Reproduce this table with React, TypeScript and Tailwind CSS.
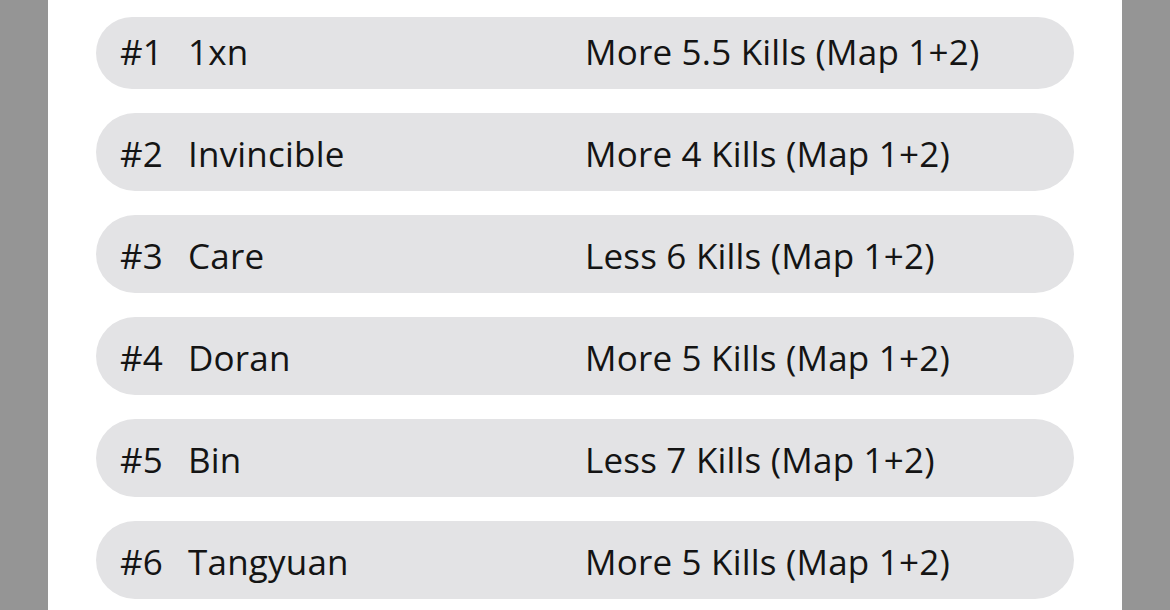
import React from "react";

// 選手ごとのピック
interface Pick {
  rank: number;
  player: string;
  line: string;
}

const picks: Pick[] = [
  { rank: 1, player: "1xn", line: "More 5.5 Kills (Map 1+2)" },
  { rank: 2, player: "Invincible", line: "More 4 Kills (Map 1+2)" },
  { rank: 3, player: "Care", line: "Less 6 Kills (Map 1+2)" },
  { rank: 4, player: "Doran", line: "More 5 Kills (Map 1+2)" },
  { rank: 5, player: "Bin", line: "Less 7 Kills (Map 1+2)" },
  { rank: 6, player: "Tangyuan", line: "More 5 Kills (Map 1+2)" },
];

const App = () => {
  return (
    <div className="w-[1170px] h-[610px] overflow-hidden bg-[#959595] flex justify-center">
      <div
        className="w-[1074px] h-full bg-white px-[48px] pt-[17px] flex flex-col gap-[24px] text-[#141414]"
        style={{ fontFamily: "'Open Sans', 'Noto Sans', sans-serif" }}
      >
        {picks.map((p, i) => (
          <div
            key={p.rank}
            className={`shrink-0 rounded-full bg-[#e3e3e5] flex items-center pl-[24px] text-[35px] leading-none tracking-[0.2px] ${
              i === 0 ? "h-[72px] pb-[3px]" : "h-[78px] pt-[3px]"
            }`}
          >
            <span className="w-[68px]">#{p.rank}</span>
            <span className="w-[397px]">{p.player}</span>
            <span>{p.line}</span>
          </div>
        ))}
      </div>
    </div>
  );
};

export default App;
